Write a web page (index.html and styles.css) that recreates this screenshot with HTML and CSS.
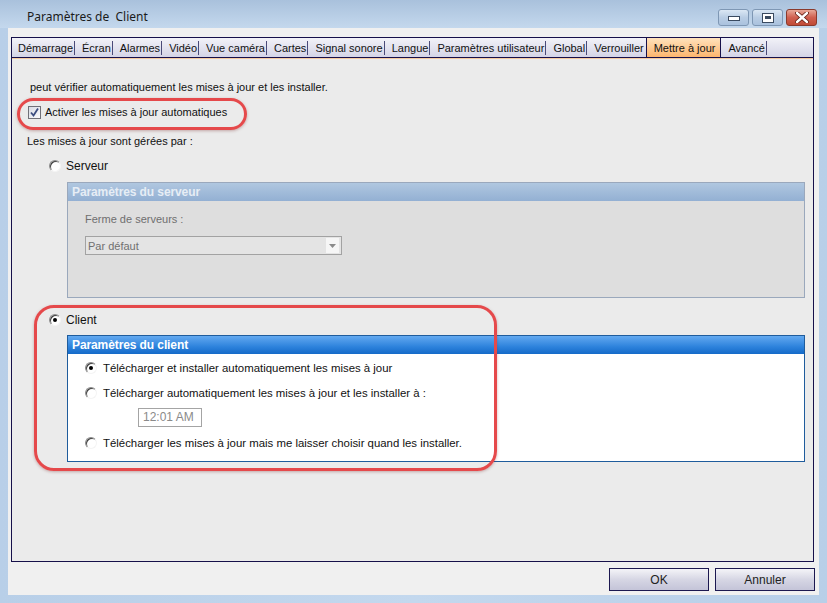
FILE: index.html
```html
<!DOCTYPE html>
<html lang="fr">
<head>
  <meta charset="UTF-8">
  <title>Paramètres de Client</title>
  <link rel="stylesheet" href="styles.css">
</head>
<body>
  <div class="window">
    <div class="titlebar">
      <span class="title">Paramètres de&nbsp; Client</span>
      <div class="controls">
        <span class="ctl">
          <svg width="12" height="6" viewBox="0 0 12 6"><rect x="0.5" y="1.5" width="11" height="4" fill="#fff" stroke="#3a4a60"/></svg>
        </span>
        <span class="ctl">
          <svg width="12" height="10" viewBox="0 0 12 10"><rect x="0.5" y="0.5" width="11" height="9" fill="#fff" stroke="#3a4a60"/><rect x="3" y="3" width="6" height="3" fill="#3a4a60"/></svg>
        </span>
        <span class="ctl close">
          <svg width="14" height="11" viewBox="0 0 14 11"><path d="M2 1 L12 10 M12 1 L2 10" stroke="#5a1a10" stroke-width="4" stroke-linecap="round"/><path d="M2 1 L12 10 M12 1 L2 10" stroke="#fff" stroke-width="2.4" stroke-linecap="round"/></svg>
        </span>
      </div>
    </div>

    <div class="client">
      <div class="tabpanel">
        <div class="tabs">
          <span class="tab first">Démarrage</span>
          <span class="tab">Écran</span>
          <span class="tab">Alarmes</span>
          <span class="tab">Vidéo</span>
          <span class="tab">Vue caméra</span>
          <span class="tab">Cartes</span>
          <span class="tab">Signal sonore</span>
          <span class="tab">Langue</span>
          <span class="tab">Paramètres utilisateur</span>
          <span class="tab">Global</span>
          <span class="tab before-active">Verrouiller</span>
          <span class="tab active">Mettre à jour</span>
          <span class="tab">Avancé</span>
        </div>

        <div class="page">
          <p class="intro">peut vérifier automatiquement les mises à jour et les installer.</p>

          <div class="check-row">
            <span class="checkbox">
              <svg width="11" height="11" viewBox="0 0 11 11"><path d="M2 5.5 L4.5 8.5 L9 1.5" fill="none" stroke="#3c4d80" stroke-width="1.8"/></svg>
            </span>
            Activer les mises à jour automatiques
          </div>

          <p class="managed">Les mises à jour sont gérées par :</p>

          <div class="radio-row">
            <span class="radio"></span>Serveur
          </div>

          <div class="group server">
            <div class="group-head">Paramètres du serveur</div>
            <div class="group-body">
              <div class="field-label">Ferme de serveurs :</div>
              <div class="select">
                <span>Par défaut</span>
                <span class="select-arrow"><svg width="7" height="4" viewBox="0 0 7 4"><path d="M0 0 L7 0 L3.5 4 Z" fill="#8a8a8a"/></svg></span>
              </div>
            </div>
          </div>

          <div class="radio-row client-row">
            <span class="radio on"></span>Client
          </div>

          <div class="group client-group">
            <div class="group-head">Paramètres du client</div>
            <div class="group-body">
              <div class="option"><span class="radio on"></span>Télécharger et installer automatiquement les mises à jour</div>
              <div class="option second"><span class="radio"></span>Télécharger automatiquement les mises à jour et les installer à :</div>
              <div class="time">12:01 AM</div>
              <div class="option third"><span class="radio"></span>Télécharger les mises à jour mais me laisser choisir quand les installer.</div>
            </div>
          </div>

          <div class="mark mark-check"></div>
          <div class="mark mark-client"></div>
        </div>
      </div>

      <div class="buttons">
        <button class="btn">OK</button>
        <button class="btn">Annuler</button>
      </div>
    </div>
  </div>
</body>
</html>
```

FILE: styles.css
```css
body {
  margin: 0;
  font-family: 'Liberation Sans', Arial, sans-serif;
  color: #111;
  background: #bcd3eb;
}

.window {
  width: 827px;
  height: 603px;
  background: linear-gradient(to right, #b8cfe8, #c3d8ee 50%, #b8cfe8);
}

.titlebar {
  height: 28px;
  display: flex;
  align-items: flex-start;
  justify-content: space-between;
  background: linear-gradient(to bottom, #a9c1dc, #c4d8ed);
}

.title {
  font-family: 'Noto Sans', 'Open Sans', sans-serif;
  font-size: 12px;
  color: #1b1b1b;
  padding: 8px 0 0 27px;
}

.controls {
  display: flex;
  gap: 3px;
  padding: 9px 10px 0 0;
}

.ctl {
  width: 29px;
  height: 15px;
  border: 1px solid #7e97b4;
  border-radius: 3px;
  display: flex;
  align-items: center;
  justify-content: center;
  background: linear-gradient(to bottom, #dbe7f4, #b9cde4 50%, #aac2de);
}

.ctl.close {
  width: 29px;
  border-color: #8a3a2c;
  background: linear-gradient(to bottom, #e8a898, #d06050 50%, #c04a36);
}

.client {
  margin: 0 8px;
  height: 567px;
  background: #f0f0f0;
  padding: 9px 0 0 3px;
  box-sizing: border-box;
}

.tabpanel {
  width: 803px;
  height: 525px;
  border: 1px solid #16104a;
  box-sizing: border-box;
  display: flex;
  flex-direction: column;
  background: #ebebeb;
}

.tabs {
  height: 20px;
  border-bottom: 1px solid #16104a;
  box-sizing: border-box;
  display: flex;
  align-items: stretch;
  background: linear-gradient(to bottom, #f2f2f8, #d4d4e6);
  font-size: 11px;
}

.tab {
  display: flex;
  align-items: center;
  padding: 0 2px 0 7px;
  position: relative;
}

.tab::after {
  content: "";
  position: absolute;
  right: 0;
  top: 3px;
  bottom: 2px;
  width: 1px;
  background: #4a4a78;
}

.tab.first {
  padding-left: 6px;
}

.tab.before-active::after {
  display: none;
}

.tab.active {
  padding: 0 5px 0 7px;
  border-left: 1px solid #16104a;
  border-right: 1px solid #16104a;
  background: linear-gradient(to bottom, #ffe2bc, #fdb66e);
}

.tab.active::after {
  display: none;
}

.page {
  flex: 1;
  position: relative;
  border-top: 1px solid #f6caa0;
  font-size: 11px;
}

.intro {
  margin: 21px 0 0 18px;
  line-height: 14px;
}

.check-row {
  margin: 11px 0 0 16px;
  height: 14px;
  display: flex;
  align-items: center;
  gap: 4px;
}

.checkbox {
  width: 11px;
  height: 11px;
  border: 1px solid #707078;
  background: linear-gradient(135deg, #d8dbe4, #fbfbfd);
  display: flex;
  align-items: center;
  justify-content: center;
}

.managed {
  margin: 15px 0 0 15px;
  line-height: 14px;
}

.radio-row {
  margin: 11px 0 0 37px;
  height: 14px;
  display: flex;
  align-items: center;
  gap: 5px;
  font-size: 12px;
}

.client-row {
  margin-top: 15px;
}

.radio {
  width: 12px;
  height: 12px;
  border-radius: 50%;
  box-sizing: border-box;
  background: #fff;
  border: 1px solid;
  border-color: #8c8c8c #f4f4f4 #f4f4f4 #8c8c8c;
  box-shadow: inset 1px 1px 0 #404040;
  position: relative;
  flex: none;
}

.radio.on::after {
  content: "";
  position: absolute;
  left: 3px;
  top: 3px;
  width: 4px;
  height: 4px;
  border-radius: 50%;
  background: #000;
}

.group {
  margin: 9px 8px 0 55px;
  border: 1px solid #9aa8bc;
}

.group-head {
  height: 18px;
  line-height: 18px;
  padding-left: 4px;
  font-size: 12px;
  font-weight: bold;
  letter-spacing: -0.1px;
}

.server .group-head {
  color: #e6edf5;
  background: linear-gradient(to bottom, #b0c7e0, #93b0d3);
}

.server .group-body {
  height: 96px;
  background: #dedede;
  padding: 11px 0 0 17px;
  box-sizing: border-box;
}

.field-label {
  color: #6f6f6f;
  line-height: 14px;
  font-size: 11px;
}

.select {
  margin-top: 10px;
  width: 257px;
  height: 19px;
  box-sizing: border-box;
  border: 1px solid #a2a2a2;
  background: #e4e4e4;
  color: #707070;
  display: flex;
  align-items: center;
  justify-content: space-between;
  padding-left: 2px;
  font-size: 11px;
}

.select-arrow {
  width: 13px;
  height: 15px;
  margin-right: 2px;
  background: #f6f6f6;
  display: flex;
  align-items: center;
  justify-content: center;
}

.client-group {
  margin-top: 8px;
  border-color: #1f5c9c;
}

.client-group .group-head {
  color: #fff;
  background: linear-gradient(to bottom, #63a9f0, #2d82dc 60%, #146ac8);
}

.client-group .group-body {
  height: 107px;
  background: #fff;
  padding: 7px 0 0 17px;
  box-sizing: border-box;
}

.option {
  height: 14px;
  display: flex;
  align-items: center;
  gap: 6px;
  font-size: 11.4px;
}

.option.second {
  margin-top: 11px;
}

.option.third {
  margin-top: 9px;
}

.time {
  margin: 8px 0 0 53px;
  width: 64px;
  height: 19px;
  box-sizing: border-box;
  border: 1px solid #a4a4a4;
  color: #8a8a8a;
  font-size: 12px;
  line-height: 17px;
  padding-left: 4px;
}

.mark {
  position: absolute;
  border: 3px solid #e5494b;
  box-shadow: 0 1px 3px rgba(120, 40, 40, 0.35);
  box-sizing: border-box;
}

.mark-check {
  left: 5px;
  top: 39px;
  width: 230px;
  height: 32px;
  border-radius: 16px;
}

.mark-client {
  left: 22px;
  top: 246px;
  width: 463px;
  height: 166px;
  border-radius: 20px;
}

.buttons {
  display: flex;
  justify-content: flex-end;
  gap: 6px;
  padding: 6px 4px 0 0;
}

.btn {
  width: 100px;
  height: 23px;
  border: 1px solid #1c1850;
  background: linear-gradient(to bottom, #f4f4f8, #d6d6e4 50%, #c4c4d8);
  font-family: 'Liberation Sans', Arial, sans-serif;
  font-size: 12px;
  color: #222;
  padding: 0;
}
```
